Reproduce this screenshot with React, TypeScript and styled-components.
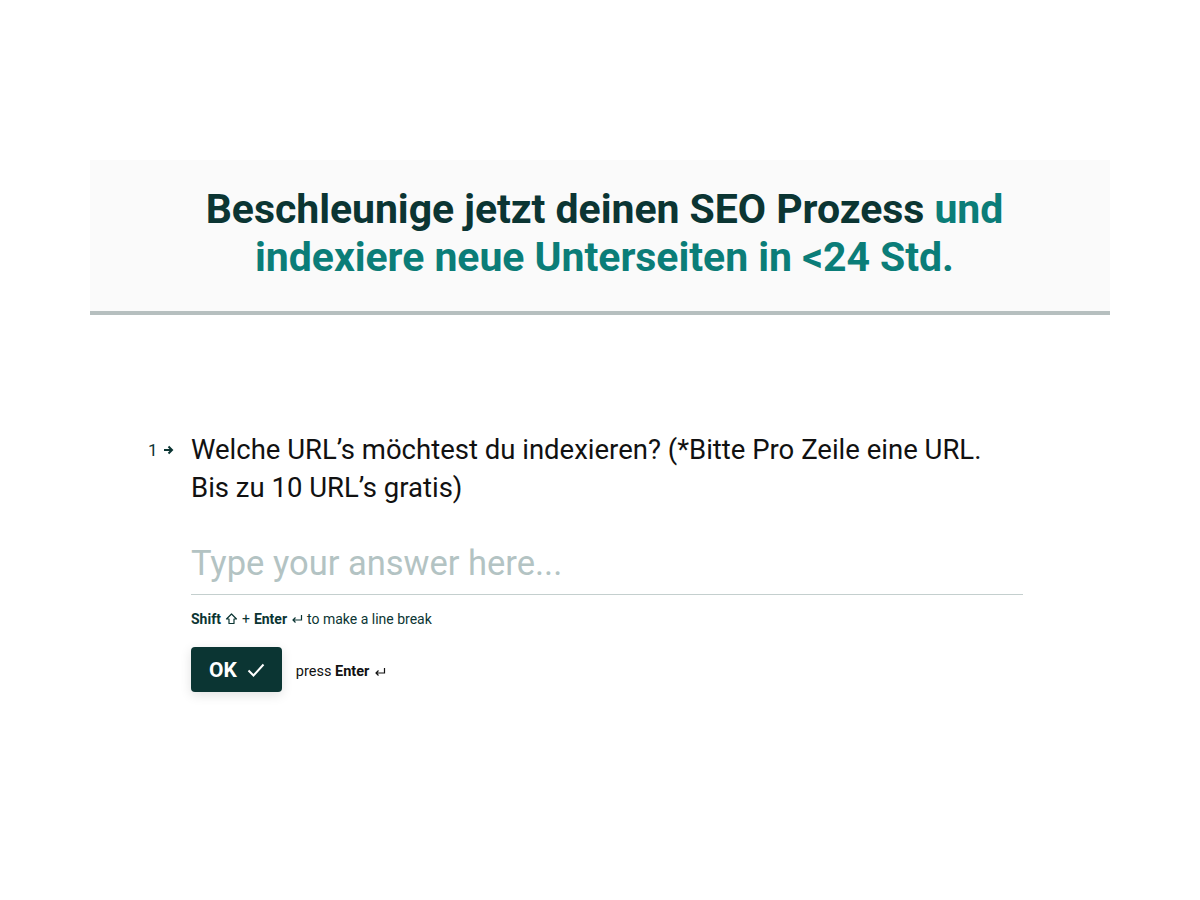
import React from "react";
import styled, { createGlobalStyle } from "styled-components";

const GlobalStyle = createGlobalStyle`
  html, body {
    margin: 0;
    padding: 0;
    background: #ffffff;
  }
  body {
    font-family: Roboto, "Noto Sans", "Liberation Sans", sans-serif;
    -webkit-font-smoothing: antialiased;
  }
`;

const Page = styled.div`
  width: 1200px;
  min-height: 900px;
  padding-top: 160px;
  box-sizing: border-box;
`;

const Hero = styled.header`
  margin: 0 90px;
  background: #fafafa;
  border-bottom: 4px solid #b6bfbf;
  padding: 25px 0 30px 9px;
  text-align: center;
`;

const Title = styled.h1`
  margin: 0;
  font-size: 41px;
  line-height: 48px;
  font-weight: 700;
  letter-spacing: -0.05px;
  color: #0b3533;
`;

const Accent = styled.span`
  color: #0b7d78;
`;

const Form = styled.section`
  display: flex;
  margin-top: 116px;
  padding: 0 177px 0 148px;
`;

const Counter = styled.div`
  width: 43px;
  flex-shrink: 0;
  display: flex;
  align-items: center;
  gap: 5px;
  height: 38px;
  color: #0b3533;
  font-size: 17px;
`;

const Body = styled.div`
  flex: 1;
  display: flex;
  flex-direction: column;
`;

const Question = styled.p`
  margin: 0;
  font-size: 27.5px;
  line-height: 38px;
  color: #111;
`;

const Answer = styled.div`
  margin-top: 36px;
  padding-bottom: 11px;
  border-bottom: 1px solid #c4cfce;
  font-size: 34.5px;
  line-height: 40px;
  color: #b3c3c3;
`;

const Hint = styled.div`
  margin-top: 15px;
  font-size: 14px;
  line-height: 18px;
  color: #0b3533;
`;

const Strong = styled.b`
  font-weight: 700;
`;

const KeyRow = styled.span`
  display: inline-flex;
  align-items: center;
  gap: 4px;
`;

const Actions = styled.div`
  display: flex;
  align-items: center;
  gap: 14px;
  margin-top: 19px;
`;

const OkButton = styled.button`
  display: flex;
  align-items: center;
  gap: 10px;
  height: 45px;
  padding: 0 17px 0 18px;
  border: none;
  border-radius: 4px;
  background: #0b3533;
  color: #fff;
  font-family: inherit;
  font-size: 21px;
  font-weight: 700;
  box-shadow: 0 3px 12px rgba(0, 0, 0, 0.12);
  cursor: pointer;
`;

const PressHint = styled.span`
  display: flex;
  align-items: center;
  gap: 5px;
  font-size: 14.5px;
  color: #111;
  padding-top: 4px;
`;

const Arrow = () => (
  <svg width="11" height="10" viewBox="0 0 11 10">
    <path d="M1 5h8M5.5 1.5L9 5 5.5 8.5" stroke="#0b3533" strokeWidth="2" fill="none" />
  </svg>
);

const Check = () => (
  <svg width="18" height="14" viewBox="0 0 18 14">
    <path d="M1.5 7.5l5 5L16.5 1.5" stroke="#fff" strokeWidth="2" fill="none" />
  </svg>
);

const ReturnKey = ({ color }: { color: string }) => (
  <svg width="12" height="10" viewBox="0 0 12 10">
    <path d="M10.5 1v5H2M4.5 3.5L2 6l2.5 2.5" stroke={color} strokeWidth="1.2" fill="none" />
  </svg>
);

const ShiftKey = () => (
  <svg width="13" height="12" viewBox="0 0 13 12">
    <path d="M6.5 1L1.5 6h2.5v4.5h5V6h2.5z" stroke="#0b3533" strokeWidth="1.2" fill="none" strokeLinejoin="round" />
  </svg>
);

export default function App() {
  return (
    <>
      <GlobalStyle />
      <Page>
        <Hero>
          <Title>
            Beschleunige jetzt deinen SEO Prozess <Accent>und</Accent>
            <br />
            <Accent>indexiere neue Unterseiten in &lt;24 Std.</Accent>
          </Title>
        </Hero>
        <Form>
          <Counter>
            <span>1</span>
            <Arrow />
          </Counter>
          <Body>
            <Question>
              Welche URL’s möchtest du indexieren? (*Bitte Pro Zeile eine URL.
              <br />
              Bis zu 10 URL’s gratis)
            </Question>
            <Answer>Type your answer here...</Answer>
            <Hint>
              <KeyRow>
                <Strong>Shift</Strong>
                <ShiftKey />
                <span>+</span>
                <Strong>Enter</Strong>
                <ReturnKey color="#0b3533" />
                <span>to make a line break</span>
              </KeyRow>
            </Hint>
            <Actions>
              <OkButton>
                OK <Check />
              </OkButton>
              <PressHint>
                <span>
                  press <Strong>Enter</Strong>
                </span>
                <ReturnKey color="#111" />
              </PressHint>
            </Actions>
          </Body>
        </Form>
      </Page>
    </>
  );
}
